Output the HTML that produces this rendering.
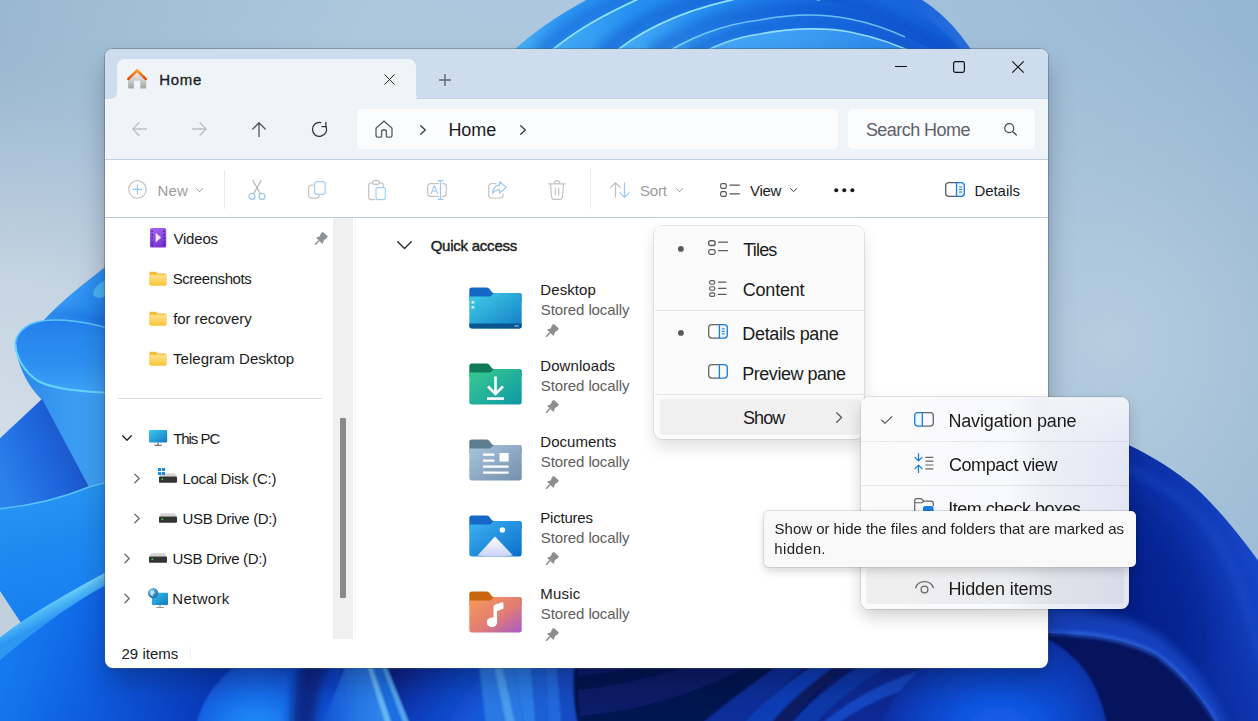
<!DOCTYPE html>
<html>
<head>
<meta charset="utf-8">
<title>Home - File Explorer</title>
<style>
*{box-sizing:border-box;margin:0;padding:0}
html,body{width:1258px;height:721px;overflow:hidden}
body{font-family:"Liberation Sans",sans-serif;position:relative;background:#a9c3d8;color:#1b1b1b}
.abs{position:absolute}
#wall{position:absolute;left:0;top:0;width:1258px;height:721px}
.t{position:absolute;white-space:nowrap;line-height:1}
svg{overflow:visible}

</style>
</head>
<body>
<svg id="wall" viewBox="0 0 1258 721">
<defs>
  <linearGradient id="bgL" x1="0" y1="0" x2="1" y2="0">
    <stop offset="0" stop-color="#a0bcd3"/><stop offset=".1" stop-color="#a9c4d9"/><stop offset=".3" stop-color="#b8d0e2"/><stop offset=".45" stop-color="#b8d0e3"/><stop offset=".8" stop-color="#a8c5dc"/><stop offset="1" stop-color="#9abad5"/>
  </linearGradient>
  <linearGradient id="bgV" x1="0" y1="0" x2="0" y2="1"><stop offset="0" stop-color="#7fa6c8" stop-opacity=".2"/><stop offset=".6" stop-color="#7fa6c8" stop-opacity="0"/></linearGradient>
  <radialGradient id="bgGlowL" cx="0" cy="430" r="380" gradientUnits="userSpaceOnUse">
    <stop offset="0" stop-color="#d2dde8"/><stop offset=".4" stop-color="#c8d6e3" stop-opacity=".95"/><stop offset=".72" stop-color="#b6cadc" stop-opacity=".6"/><stop offset="1" stop-color="#a6bfd5" stop-opacity="0"/>
  </radialGradient>
  <radialGradient id="bgGlowR" cx="1110" cy="340" r="330" gradientUnits="userSpaceOnUse">
    <stop offset="0" stop-color="#b9cee0" stop-opacity=".9"/><stop offset="1" stop-color="#a9c3d9" stop-opacity="0"/>
  </radialGradient>
  <!-- top bloom -->
  <linearGradient id="t0" x1="512" y1="0" x2="973" y2="0" gradientUnits="userSpaceOnUse">
    <stop offset="0" stop-color="#4db2f8"/><stop offset=".1" stop-color="#2f97f2"/><stop offset=".5" stop-color="#1a78ea"/><stop offset=".85" stop-color="#1763da"/><stop offset="1" stop-color="#2a70de"/>
  </linearGradient>
  <linearGradient id="t4" x1="552" y1="0" x2="960" y2="0" gradientUnits="userSpaceOnUse">
    <stop offset="0" stop-color="#44aef8"/><stop offset=".2" stop-color="#2690f0"/><stop offset=".6" stop-color="#1871e6"/><stop offset="1" stop-color="#165fd6"/>
  </linearGradient>
  <linearGradient id="t3" x1="616" y1="0" x2="957" y2="0" gradientUnits="userSpaceOnUse">
    <stop offset="0" stop-color="#48b0f8"/><stop offset=".25" stop-color="#2890f0"/><stop offset=".6" stop-color="#156be2"/><stop offset="1" stop-color="#1259d2"/>
  </linearGradient>
  <linearGradient id="t2" x1="669" y1="0" x2="938" y2="0" gradientUnits="userSpaceOnUse">
    <stop offset="0" stop-color="#3ba3f5"/><stop offset=".3" stop-color="#1f84ec"/><stop offset=".7" stop-color="#176ee2"/><stop offset="1" stop-color="#1560d8"/>
  </linearGradient>
  <linearGradient id="t1" x1="707" y1="0" x2="912" y2="0" gradientUnits="userSpaceOnUse">
    <stop offset="0" stop-color="#45a9f6"/><stop offset=".5" stop-color="#3b9bf1"/><stop offset="1" stop-color="#2a84ea"/>
  </linearGradient>

  <!-- left bloom -->
  <linearGradient id="l_up" x1="45" y1="300" x2="110" y2="340" gradientUnits="userSpaceOnUse">
    <stop offset="0" stop-color="#3f9ff4"/><stop offset=".5" stop-color="#2a8cf0"/><stop offset="1" stop-color="#1c74e4"/>
  </linearGradient>
  <linearGradient id="l_cup" x1="60" y1="320" x2="60" y2="392" gradientUnits="userSpaceOnUse">
    <stop offset="0" stop-color="#2482ec"/><stop offset=".6" stop-color="#2d8ff0"/><stop offset="1" stop-color="#3ea2f5"/>
  </linearGradient>
  <linearGradient id="l_cone" x1="20" y1="400" x2="105" y2="400" gradientUnits="userSpaceOnUse">
    <stop offset="0" stop-color="#2c88ea"/><stop offset=".5" stop-color="#3a9af1"/><stop offset="1" stop-color="#3fa0f3"/>
  </linearGradient>
  <linearGradient id="l_dark" x1="0" y1="470" x2="80" y2="440" gradientUnits="userSpaceOnUse">
    <stop offset="0" stop-color="#2a80ec"/><stop offset=".55" stop-color="#1f66dc"/><stop offset="1" stop-color="#1a52c6"/>
  </linearGradient>
  <linearGradient id="l_low" x1="0" y1="490" x2="40" y2="640" gradientUnits="userSpaceOnUse">
    <stop offset="0" stop-color="#2a98f3"/><stop offset=".4" stop-color="#1e8af0"/><stop offset="1" stop-color="#157cf0"/>
  </linearGradient>
  <linearGradient id="l_band" x1="50" y1="600" x2="58" y2="616" gradientUnits="userSpaceOnUse">
    <stop offset="0" stop-color="#7ad4fb"/><stop offset=".35" stop-color="#52bbf6"/><stop offset="1" stop-color="#2c98f2"/>
  </linearGradient>
  <linearGradient id="l_bot" x1="20" y1="640" x2="230" y2="715" gradientUnits="userSpaceOnUse">
    <stop offset="0" stop-color="#1478ef"/><stop offset=".42" stop-color="#0e5ade"/><stop offset=".85" stop-color="#0a3cbc"/><stop offset="1" stop-color="#0a36b0"/>
  </linearGradient>

  <!-- bottom -->
  <linearGradient id="bt_base" x1="0" y1="0" x2="1258" y2="0" gradientUnits="userSpaceOnUse">
    <stop offset="0" stop-color="#1272ec"/><stop offset=".15" stop-color="#0b44c2"/><stop offset=".3" stop-color="#0c3bb6"/><stop offset=".45" stop-color="#07195c"/><stop offset=".57" stop-color="#050f44"/><stop offset=".7" stop-color="#081f78"/><stop offset="1" stop-color="#0b2c9c"/>
  </linearGradient>
  <radialGradient id="bt_p1" cx="255" cy="738" r="92" gradientUnits="userSpaceOnUse">
    <stop offset="0" stop-color="#2498f8"/><stop offset=".3" stop-color="#1c7ef2"/><stop offset=".65" stop-color="#1460e2"/><stop offset="1" stop-color="#0d44c6"/>
  </radialGradient>
  <linearGradient id="bt_p2" x1="318" y1="0" x2="360" y2="0" gradientUnits="userSpaceOnUse">
    <stop offset="0" stop-color="#0a2c98"/><stop offset=".4" stop-color="#1656da"/><stop offset="1" stop-color="#2270e6"/>
  </linearGradient>
  <linearGradient id="bt_tri" x1="325" y1="0" x2="395" y2="0" gradientUnits="userSpaceOnUse"><stop offset="0" stop-color="#1656d6"/><stop offset=".5" stop-color="#2678e6"/><stop offset="1" stop-color="#348cee"/></linearGradient>
  <filter id="b1" filterUnits="userSpaceOnUse" x="-50" y="-50" width="1400" height="850"><feGaussianBlur stdDeviation="1.1"/></filter>
  <linearGradient id="bt_rib" x1="0" y1="0" x2="1" y2="0">
    <stop offset="0" stop-color="#4aa6f3"/><stop offset=".5" stop-color="#2c7fe8"/><stop offset="1" stop-color="#1a5cd6"/>
  </linearGradient>
  <linearGradient id="bt_d1" x1="395" y1="660" x2="480" y2="720" gradientUnits="userSpaceOnUse">
    <stop offset="0" stop-color="#081f80"/><stop offset=".45" stop-color="#0c3cb8"/><stop offset="1" stop-color="#1659dc"/>
  </linearGradient>
  <radialGradient id="sph" cx="1000" cy="745" r="125" gradientUnits="userSpaceOnUse">
    <stop offset="0" stop-color="#1767f0"/><stop offset=".4" stop-color="#1053de"/><stop offset=".8" stop-color="#0b3ab6"/><stop offset="1" stop-color="#082a98"/>
  </radialGradient>
  <linearGradient id="r_pet" x1="1110" y1="520" x2="1258" y2="470" gradientUnits="userSpaceOnUse">
    <stop offset="0" stop-color="#08248e"/><stop offset=".45" stop-color="#0d33ac"/><stop offset=".8" stop-color="#1646c6"/><stop offset="1" stop-color="#1b4fd0"/>
  </linearGradient>
  <linearGradient id="r_low" x1="1100" y1="640" x2="1258" y2="700" gradientUnits="userSpaceOnUse">
    <stop offset="0" stop-color="#0a2fa6"/><stop offset=".5" stop-color="#1240be"/><stop offset="1" stop-color="#1a50d0"/>
  </linearGradient>
  <clipPath id="cp_up"><path d="M112,262 C88,280 62,300 40,324 L60,345 L112,345 Z"/></clipPath>
  <filter id="b2" filterUnits="userSpaceOnUse" x="-50" y="-50" width="1400" height="850"><feGaussianBlur stdDeviation="2"/></filter>
  <filter id="b5" filterUnits="userSpaceOnUse" x="-50" y="-50" width="1400" height="850"><feGaussianBlur stdDeviation="5"/></filter>
  <filter id="b10" filterUnits="userSpaceOnUse" x="-50" y="-50" width="1400" height="850"><feGaussianBlur stdDeviation="10"/></filter>
</defs>
<rect width="1258" height="721" fill="url(#bgL)"/>
<rect width="1258" height="721" fill="url(#bgV)"/>
<rect width="1258" height="721" fill="url(#bgGlowL)"/>
<rect width="1258" height="721" fill="url(#bgGlowR)"/>
<!-- TOP BLOOM -->
<g>
  <path d="M503,60 C528,36 556,16 590,-2 L919,-2 C945,14 962,34 979,62 Z" fill="url(#t0)"/>
  <path d="M545,56 C575,30 605,14 645,-4" fill="none" stroke="#0f55cc" stroke-width="16" opacity=".38" filter="url(#b5)" transform="translate(-6,-4)"/>
  <path d="M545,56 C575,30 605,14 645,-4 L890,-4 C920,12 948,30 968,60 Z" fill="url(#t4)"/>
  <path d="M545,56 C575,30 605,14 645,-4" fill="none" stroke="#8fe2ff" stroke-width="1.8"/>
  <path d="M606,60 C640,28 690,8 745,-3 C790,-6 840,0 885,20 C915,34 940,46 960,60" fill="none" stroke="#0c4cc4" stroke-width="18" opacity=".4" filter="url(#b5)" transform="translate(-5,-6)"/>
  <path d="M606,60 C640,28 690,8 745,-3 C790,-6 840,0 885,20 C915,34 940,46 960,60 Z" fill="url(#t3)"/>
  <path d="M606,60 C640,28 690,8 745,-3 C780,-6 800,-4 820,0" fill="none" stroke="#8fe2ff" stroke-width="1.8"/>
  <path d="M655,60 C690,36 725,24 760,20 C790,14 820,13 850,19 C885,27 915,40 945,56" fill="none" stroke="#0c4cc4" stroke-width="16" opacity=".4" filter="url(#b5)" transform="translate(-3,-7)"/>
  <path d="M655,60 C690,36 725,24 760,20 C790,14 820,13 850,19 C885,27 915,40 945,56 L945,60 Z" fill="url(#t2)"/>
  <path d="M655,60 C690,36 725,24 760,20 C790,14 820,13 850,19 C870,23 890,30 905,37" fill="none" stroke="#8fe2ff" stroke-width="1.7" opacity=".9"/>
  <path d="M690,60 C715,44 738,37 760,34 C790,28 825,27 850,32 C875,37 895,43 920,56" fill="none" stroke="#0c4cc4" stroke-width="14" opacity=".4" filter="url(#b5)" transform="translate(-2,-6)"/>
  <path d="M690,60 C715,44 738,37 760,34 C790,28 825,27 850,32 C875,37 895,43 920,56 L920,60 Z" fill="url(#t1)"/>
  <path d="M690,60 C715,44 738,37 760,34 C790,28 825,27 850,32 C875,37 895,43 920,56" fill="none" stroke="#9be6ff" stroke-width="1.7" opacity=".9"/>
</g>
<!-- LEFT BLOOM -->
<g>
  <!-- upper petal -->
  <path d="M112,262 C88,280 62,300 40,324 L60,345 L112,345 Z" fill="url(#l_up)"/>
  <ellipse cx="104" cy="289" rx="12" ry="7" fill="#46b4f2" transform="rotate(-35 104 289)"/>
  <!-- shadow under upper petal onto cup -->
  <!-- cone body -->
  <path d="M16,350 C20,372 30,388 42,400 L90,490 L112,490 L112,380 Z" fill="url(#l_cone)"/>
  <!-- cup interior -->
  <path d="M15.5,344 C15.5,336 22,328 32,323.5 C48,317.5 78,319 112,329.5 L112,393 C85,391.5 55,390 38,381 C24,372 15.5,356 15.5,344 Z" fill="url(#l_cup)"/>
  <g clip-path="url(#cp_up)"><path d="M40,316 C60,313 90,316 116,324" fill="none" stroke="#1560d0" stroke-width="9" opacity=".4" filter="url(#b5)"/></g>
  <path d="M15.5,344 C15.5,336 22,328 32,323.5 C48,317.5 78,319 112,329.5" fill="none" stroke="#5cc4fb" stroke-width="1.5"/>
  <path d="M15.5,344 C15.5,356 24,372 38,381 C55,390 85,391.5 112,393" fill="none" stroke="#66d4ff" stroke-width="2"/>
  <!-- dark petal -->
  <path d="M-2,440 L42,399 L89,487 C60,499 30,506 -2,510 Z" fill="url(#l_dark)"/>
  <!-- lower big petal -->
  <path d="M-2,509 C30,506 62,498 89,487 C96,485 104,483 112,482 L112,600 L-2,680 Z" fill="url(#l_low)"/>
  <path d="M-2,509 C30,506 62,498 89,487 C96,485 104,483 112,482" fill="none" stroke="#58c2f8" stroke-width="1.6"/>
  <!-- gray notch -->
  <path d="M-2,588 L21,623 L-2,640 Z" fill="#c2d0dd"/>
  <!-- below band -->
  <path d="M-2,650 L112,578 L340,640 L340,725 L-2,725 Z" fill="url(#l_bot)"/>
  <!-- band -->
  <path d="M-2,639 C8,631 14,627 21,622 C50,603 80,586 112,569 L112,582 C80,598 40,626 -2,662 Z" fill="url(#l_band)"/>
</g>
<!-- RIGHT PETAL -->
<g>
  <path d="M1040,412 C1075,422 1125,440 1160,462 C1172,469 1182,477 1190,483 C1213,502 1240,535 1262,566 L1262,725 L1040,725 L1040,440 Z" fill="url(#r_pet)"/>
  <path d="M1090,478 C1140,486 1178,522 1202,580 C1216,620 1212,650 1198,680 L1040,700 L1040,478 Z" fill="#061d86" opacity=".38" filter="url(#b10)"/>
  <path d="M1100,462 C1150,472 1195,500 1222,548 C1240,580 1252,620 1260,660" fill="none" stroke="#2458d6" stroke-width="5" opacity=".55" filter="url(#b5)"/>
  <!-- upper surface band above ridge -->
  <path d="M1040,606 C1085,606 1130,616 1160,636 C1190,658 1212,690 1228,725 L1200,725 L1040,640 Z" fill="#1a4ccc" opacity=".75" filter="url(#b5)"/>
  <!-- dark wedge under ridge -->
  <path d="M1040,633 C1085,633 1125,638 1156,654 C1183,674 1205,702 1217,725 L1040,725 Z" fill="#06145e"/>
  <path d="M1048,632.6 C1085,633 1125,638 1156,654 C1183,674 1205,702 1217,723" fill="none" stroke="#2f68e4" stroke-width="2.6" opacity=".9" filter="url(#b2)"/>
  <path d="M1070,633.5 C1100,634 1130,640 1156,654 C1166,661 1176,669 1186,679" fill="none" stroke="#3a74ea" stroke-width="1.8" opacity=".7" filter="url(#b2)" stroke-linecap="round"/>
</g>
<!-- BOTTOM STRIP -->
<g filter="url(#b1)">
  <rect x="330" y="655" width="715" height="70" fill="url(#bt_base)"/>
  <!-- petal 1 -->
  <path d="M196,725 C203,696 222,672 252,655 L340,655 L340,725 Z" fill="url(#bt_p1)"/>
  <path d="M318,650 C308,680 304,700 304,730" fill="none" stroke="#08207c" stroke-width="26" opacity=".85" filter="url(#b5)"/>
  
  <path d="M354,655 L322,725 L364,725 L358,655 Z" fill="url(#bt_p2)"/>
  <!-- light ribbons -->
  <path d="M350,655 L368,655 L404,725 L322,725 Z" fill="url(#bt_tri)"/>
  <path d="M368,655 L380,655 L412,725 L392,725 Z" fill="#1f6ee0"/>
  <path d="M364,655 L368,655 L392,725 L386,725 Z" fill="#7cc9f8" opacity=".75"/>
  <path d="M378,655 L382,655 L410,725 L404,725 Z" fill="#62b4f4" opacity=".8"/>
  <path d="M382,655 L500,655 L500,725 L410,725 Z" fill="url(#bt_d1)"/>
  <!-- ribbons 480-560 -->
  <path d="M478,655 L492,655 L506,725 L486,725 Z" fill="#2a78e4"/>
  <path d="M492,655 L500,655 L516,725 L506,725 Z" fill="#4a9cee"/>
  <path d="M500,655 L512,655 L524,725 L516,725 Z" fill="#2a78e4"/>
  <path d="M512,655 L530,655 L536,725 L524,725 Z" fill="#2c7ce6"/>
  <path d="M530,655 L545,655 L548,725 L536,725 Z" fill="#1c5ed6"/>
  <path d="M545,655 L556,655 L562,725 L548,725 Z" fill="#2068dc"/>
  <path d="M556,655 L575,655 C572,690 574,705 578,725 L562,725 Z" fill="#164cc4"/>
  <!-- dark navy w/ curves -->
  <path d="M575,655 C572,690 574,705 578,725 L760,725 L800,655 Z" fill="#061450"/>
  <path d="M578,690 C630,684 680,670 720,655 L770,655 C710,690 640,712 580,716 Z" fill="#0a2278" opacity=".55"/>
  <path d="M578,676 C620,672 650,664 676,655 L640,655 C620,662 600,666 578,668 Z" fill="#0b2a8c" opacity=".5"/>
  <!-- diagonal ribbons 720-900 -->
  <path d="M700,725 C730,700 760,678 792,655 L820,655 C790,680 765,700 742,725 Z" fill="#0c2f98"/>
  <path d="M742,725 C770,695 800,672 830,655 L850,655 C815,680 790,700 770,725 Z" fill="#103eb4"/>
  <path d="M770,725 C790,700 815,680 850,655 L858,655 C830,680 806,700 790,725 Z" fill="#071a60"/>
  <path d="M790,725 C815,695 850,670 880,655 L905,655 C865,680 835,700 815,725 Z" fill="#0d38a8"/>
  <path d="M815,725 C835,700 865,680 905,655 L1000,655 L1000,725 Z" fill="#0a2c94"/>
  <path d="M836,725 C870,700 905,688 940,680 L940,664 C900,675 860,692 820,725 Z" fill="#1246c2"/>
  <!-- sphere -->
  <path d="M880,725 C895,690 930,650 985,632 C1035,622 1070,648 1089,676 C1098,692 1104,708 1107,725 Z" fill="url(#sph)"/>
</g>
</svg>
<div class="abs" style="left:105px;top:49px;width:943px;height:619px;border-radius:8px;box-shadow:0 0 0 1px rgba(70,85,105,.38),0 15px 26px rgba(0,0,25,.25),0 2px 10px rgba(0,0,20,.06)"></div>
<div class="abs" style="left:105px;top:49px;width:943px;height:619px;border-radius:8px;overflow:hidden;background:#fff"><div class="abs" style="left:-105px;top:-49px;width:1258px;height:721px">
<div class="abs" style="left:105px;top:49px;width:943px;height:50px;background:#cedded;"></div>
<div class="abs" style="left:117px;top:59px;width:299px;height:40px;background:#eff4f9;border-radius:8px 8px 0 0"></div>
<svg class="abs" style="left:110px;top:92px;" width="7" height="7" viewBox="0 0 7 7"><path d="M7,0 L7,7 L0,7 A7,7 0 0 0 7,0Z" fill="#eff4f9"/></svg>
<svg class="abs" style="left:416px;top:93.5px;" width="5.5" height="5.5" viewBox="0 0 5.5 5.5"><path d="M0,0 L0,5.5 L5.5,5.5 A5.5,5.5 0 0 1 0,0Z" fill="#eff4f9"/></svg>
<svg class="abs" style="left:127px;top:69px;" width="20.4" height="20" viewBox="0 0 20.4 20"><defs><linearGradient id="hb" x1="0" y1="0" x2="0" y2="1"><stop offset="0" stop-color="#ededed"/><stop offset=".45" stop-color="#d4d4d4"/><stop offset="1" stop-color="#a3a3a3"/></linearGradient>
<linearGradient id="hr" x1="0" y1="0" x2="0" y2="1"><stop offset="0" stop-color="#ff9a1f"/><stop offset="1" stop-color="#e24e0c"/></linearGradient></defs>
<path d="M1.1,9.6 L10.1,1.8 L19.2,9.6 L19.2,18.6 Q19.2,19.6 18.2,19.6 L13.3,19.6 L13.3,11.7 L6.9,11.7 L6.9,19.6 L2.1,19.6 Q1.1,19.6 1.1,18.6Z" fill="url(#hb)"/>
<path d="M1.3,10 L10.1,1.5 L18.9,10" fill="none" stroke="url(#hr)" stroke-width="2.5" stroke-linecap="round" stroke-linejoin="round"/></svg>
<div class="t" style="left:159.3px;top:72.0px;font-size:15px;color:#1b1b1b;letter-spacing:0.67px;-webkit-text-stroke:.3px #1b1b1b;">Home</div>
<svg class="abs" style="left:383.5px;top:73.5px;" width="11" height="11" viewBox="0 0 11 11"><path d="M0.5,0.5 L10.5,10.5 M10.5,0.5 L0.5,10.5" stroke="#222" stroke-width="1.0" fill="none"/></svg>
<svg class="abs" style="left:439px;top:74px;" width="12" height="12" viewBox="0 0 12 12"><path d="M6,0 V12 M0,6 H12" stroke="#5d6671" stroke-width="1.4" fill="none"/></svg>
<svg class="abs" style="left:895px;top:61px;" width="12" height="12" viewBox="0 0 12 12"><path d="M0,5.5 H12" stroke="#111" stroke-width="1.1"/></svg>
<svg class="abs" style="left:953px;top:61px;" width="12" height="12" viewBox="0 0 12 12"><rect x="0.6" y="0.6" width="10.8" height="10.8" rx="1.8" fill="none" stroke="#111" stroke-width="1.2"/></svg>
<svg class="abs" style="left:1012px;top:61px;" width="12" height="12" viewBox="0 0 12 12"><path d="M0.3,0.3 L11.7,11.7 M11.7,0.3 L0.3,11.7" stroke="#111" stroke-width="1.15" fill="none"/></svg>
<div class="abs" style="left:105px;top:99px;width:943px;height:60px;background:#eff4f9;"></div>
<div class="abs" style="left:416px;top:98px;width:632px;height:1px;background:#c6d3e4;"></div>
<div class="abs" style="left:105px;top:159px;width:943px;height:1px;background:#c0d0e3;"></div>
<div class="abs" style="left:357px;top:109px;width:481px;height:40.4px;background:#fbfcfe;border-radius:5px"></div>
<div class="abs" style="left:848px;top:109px;width:187px;height:40.4px;background:#fbfcfe;border-radius:5px"></div>
<svg class="abs" style="left:132px;top:122px;" width="15" height="14" viewBox="0 0 15 14"><path d="M14.5,7 H1 M7,0.8 L0.8,7 L7,13.2" fill="none" stroke="#b9bfc6" stroke-width="1.3" stroke-linecap="round" stroke-linejoin="round"/></svg>
<svg class="abs" style="left:192px;top:122px;" width="15" height="14" viewBox="0 0 15 14"><path d="M0.5,7 H14 M8,0.8 L14.2,7 L8,13.2" fill="none" stroke="#b9bfc6" stroke-width="1.3" stroke-linecap="round" stroke-linejoin="round"/></svg>
<svg class="abs" style="left:252px;top:122px;" width="14" height="15" viewBox="0 0 14 15"><path d="M7,14.5 V1 M0.8,7 L7,0.8 L13.2,7" fill="none" stroke="#4f545b" stroke-width="1.3" stroke-linecap="round" stroke-linejoin="round"/></svg>
<svg class="abs" style="left:312px;top:121.9px;" width="15" height="15" viewBox="0 0 15 15"><path d="M8.72,0.51 A7.0,7.0 0 1 0 13.89,4.55" fill="none" stroke="#2e3136" stroke-width="1.25" stroke-linecap="round"/><path d="M13.9,0.3 V4.6 H9.9" fill="none" stroke="#2e3136" stroke-width="1.25" stroke-linecap="round" stroke-linejoin="round"/></svg>
<svg class="abs" style="left:375px;top:120px;" width="18" height="18.6" viewBox="0 0 18 18.6"><path d="M1,8.2 L9,1 L17,8.2 V15.5 Q17,17.2 15.3,17.2 H12.2 Q11.4,17.2 11.4,16.4 V12 Q11.4,9.8 9,9.8 Q6.6,9.8 6.6,12 V16.4 Q6.6,17.2 5.8,17.2 H2.7 Q1,17.2 1,15.5Z" fill="none" stroke="#5c6066" stroke-width="1.35" stroke-linejoin="round"/></svg>
<svg class="abs" style="left:419.5px;top:124.5px;" width="6" height="10" viewBox="0 0 6 10"><path d="M0.7,0.7 L5.3,5 L0.7,9.3" fill="none" stroke="#333" stroke-width="1.2" stroke-linecap="round" stroke-linejoin="round"/></svg>
<div class="t" style="left:448.4px;top:120.7px;font-size:18px;color:#1b1b1b;letter-spacing:-0.07px;">Home</div>
<svg class="abs" style="left:519.5px;top:124.5px;" width="6" height="10" viewBox="0 0 6 10"><path d="M0.7,0.7 L5.3,5 L0.7,9.3" fill="none" stroke="#333" stroke-width="1.2" stroke-linecap="round" stroke-linejoin="round"/></svg>
<div class="t" style="left:865.9px;top:120.7px;font-size:18px;color:#5e6268;letter-spacing:-0.55px;">Search Home</div>
<svg class="abs" style="left:1004px;top:123.2px;" width="13" height="12.6" viewBox="0 0 13 12.6"><circle cx="5.2" cy="5.2" r="4.5" fill="none" stroke="#44484e" stroke-width="1.2"/><path d="M8.5,8.5 L12.4,12" stroke="#44484e" stroke-width="1.3" stroke-linecap="round"/></svg>
<div class="abs" style="left:105px;top:160px;width:943px;height:57px;background:#ffffff;"></div>
<div class="abs" style="left:105px;top:217px;width:943px;height:1px;background:#bccde1;"></div>
<svg class="abs" style="left:128px;top:180px;" width="19" height="19" viewBox="0 0 19 19"><circle cx="9.4" cy="9.4" r="8.7" fill="none" stroke="#c3c3c3" stroke-width="1.2"/><path d="M9.4,5.2 V13.6 M5.2,9.4 H13.6" stroke="#93c7ee" stroke-width="1.2" stroke-linecap="round"/></svg>
<div class="t" style="left:157.5px;top:183.1px;font-size:15px;color:#9c9c9c;letter-spacing:0.16px;">New</div>
<svg class="abs" style="left:196px;top:188px;" width="7" height="4.5" viewBox="0 0 7 4.5"><path d="M0.5,0.5 L3.5,3.7 L6.5,0.5" fill="none" stroke="#a0a0a0" stroke-width="1" stroke-linecap="round" stroke-linejoin="round"/></svg>
<div class="abs" style="left:224px;top:170px;width:1px;height:39px;background:#eaeaea;"></div>
<svg class="abs" style="left:248px;top:180px;" width="18" height="20" viewBox="0 0 18 20"><path d="M5,0.6 L12.3,13.6 M13,0.6 L5.7,13.6" stroke="#b8b8b8" stroke-width="1.2" fill="none" stroke-linecap="round"/><circle cx="4" cy="16.4" r="3" fill="none" stroke="#9ccaf0" stroke-width="1.2"/><circle cx="14" cy="16.4" r="3" fill="none" stroke="#9ccaf0" stroke-width="1.2"/></svg>
<svg class="abs" style="left:308px;top:181px;" width="18" height="18" viewBox="0 0 18 18"><path d="M5.2,4.2 H3.6 Q0.7,4.2 0.7,7.1 V14.2 Q0.7,17.1 3.6,17.1 H8.4 Q11.2,17.1 11.3,14.6" fill="none" stroke="#c3c3c3" stroke-width="1.2" stroke-linecap="round"/><rect x="6.6" y="0.7" width="10.6" height="12.6" rx="2.6" fill="#fff" stroke="#a4cff2" stroke-width="1.2"/></svg>
<svg class="abs" style="left:368px;top:179.5px;" width="18" height="20.5" viewBox="0 0 18 20.5"><path d="M7,19.6 H3 Q0.7,19.6 0.7,17.3 V5 Q0.7,2.8 3,2.8 H4.6 M11.4,2.8 H13 Q15.3,2.8 15.3,5 V7.2" fill="none" stroke="#c3c3c3" stroke-width="1.2" stroke-linecap="round"/><rect x="4.6" y="0.7" width="6.8" height="3.6" rx="1.6" fill="none" stroke="#c3c3c3" stroke-width="1.2"/><rect x="8" y="7.6" width="9.3" height="12" rx="2" fill="#fff" stroke="#a4cff2" stroke-width="1.2"/></svg>
<svg class="abs" style="left:427px;top:180px;" width="20" height="20" viewBox="0 0 20 20"><path d="M11.5,3.6 H3.6 Q0.7,3.6 0.7,6.5 V13.5 Q0.7,16.4 3.6,16.4 H11.5 M15.6,3.6 H16.4 Q19.3,3.6 19.3,6.5 V13.5 Q19.3,16.4 16.4,16.4 H15.6" fill="none" stroke="#c3c3c3" stroke-width="1.2" stroke-linecap="round"/><path d="M11,0.6 H16 M11,19.4 H16 M13.5,0.6 V19.4" stroke="#9ccaf0" stroke-width="1.2" stroke-linecap="round"/><path d="M4.2,13.4 L7.4,5.8 L10.6,13.4 M5.2,11 H9.6" fill="none" stroke="#9ccaf0" stroke-width="1.1" stroke-linecap="round" stroke-linejoin="round"/></svg>
<svg class="abs" style="left:488px;top:181px;" width="19" height="18" viewBox="0 0 19 18"><path d="M8,2.6 H3.8 Q0.7,2.6 0.7,5.7 V13.9 Q0.7,17 3.8,17 H12 Q15.1,17 15.1,13.9 V13" fill="none" stroke="#c3c3c3" stroke-width="1.2" stroke-linecap="round"/><path d="M11.6,0.8 L18.3,6.4 L11.6,12 V8.9 Q7,8.6 4.6,12.4 Q5.2,4.6 11.6,3.9Z" fill="#fff" stroke="#9ccaf0" stroke-width="1.2" stroke-linejoin="round"/></svg>
<svg class="abs" style="left:548px;top:180px;" width="18" height="20" viewBox="0 0 18 20"><path d="M0.6,3.8 H17.4 M6.2,3.6 Q6.2,0.7 9,0.7 Q11.8,0.7 11.8,3.6 M2.4,4 L3.6,17 Q3.8,19.3 6,19.3 H12 Q14.2,19.3 14.4,17 L15.6,4" fill="none" stroke="#c3c3c3" stroke-width="1.2" stroke-linecap="round"/><path d="M7.3,8 V15 M10.7,8 V15" stroke="#c3c3c3" stroke-width="1.2" stroke-linecap="round"/></svg>
<div class="abs" style="left:590px;top:170px;width:1px;height:39px;background:#eaeaea;"></div>
<svg class="abs" style="left:610px;top:182px;" width="20" height="16" viewBox="0 0 20 16"><path d="M5.5,15.2 V0.8 M0.7,5.4 L5.5,0.7 L10.3,5.4" fill="none" stroke="#c0c0c0" stroke-width="1.2" stroke-linecap="round" stroke-linejoin="round"/><path d="M14.5,0.8 V15.2 M9.7,10.6 L14.5,15.3 L19.3,10.6" fill="none" stroke="#9ccaf0" stroke-width="1.2" stroke-linecap="round" stroke-linejoin="round"/></svg>
<div class="t" style="left:639.9px;top:183.1px;font-size:15px;color:#9c9c9c;letter-spacing:-0.13px;">Sort</div>
<svg class="abs" style="left:676px;top:188px;" width="7" height="4.5" viewBox="0 0 7 4.5"><path d="M0.5,0.5 L3.5,3.7 L6.5,0.5" fill="none" stroke="#a0a0a0" stroke-width="1" stroke-linecap="round" stroke-linejoin="round"/></svg>
<svg class="abs" style="left:720px;top:183px;" width="20" height="14" viewBox="0 0 20 14"><rect x="0.7" y="0.7" width="5.6" height="4.6" rx="1.6" fill="none" stroke="#555" stroke-width="1.2"/><rect x="0.7" y="8.7" width="5.6" height="4.6" rx="1.6" fill="none" stroke="#555" stroke-width="1.2"/><path d="M10,2.2 H19.3 M10,10.8 H19.3" stroke="#555" stroke-width="1.3" stroke-linecap="round"/></svg>
<div class="t" style="left:750.0px;top:183.1px;font-size:15px;color:#1b1b1b;letter-spacing:-0.32px;">View</div>
<svg class="abs" style="left:789.5px;top:188px;" width="7" height="4.5" viewBox="0 0 7 4.5"><path d="M0.5,0.5 L3.5,3.7 L6.5,0.5" fill="none" stroke="#444" stroke-width="1" stroke-linecap="round" stroke-linejoin="round"/></svg>
<svg class="abs" style="left:833.5px;top:187.8px;" width="21" height="4.4" viewBox="0 0 21 4.4"><circle cx="2.2" cy="2.2" r="2.05" fill="#1b1b1b"/><circle cx="10.3" cy="2.2" r="2.05" fill="#1b1b1b"/><circle cx="18.4" cy="2.2" r="2.05" fill="#1b1b1b"/></svg>
<svg class="abs" style="left:945px;top:182.4px;" width="20" height="15" viewBox="0 0 20 15"><path d="M11.5,0.7 H3.7 Q0.7,0.7 0.7,3.7 V11.3 Q0.7,14.3 3.7,14.3 H11.5" fill="none" stroke="#5a5a5a" stroke-width="1.3"/><path d="M11.5,0.7 H16.3 Q19.3,0.7 19.3,3.7 V11.3 Q19.3,14.3 16.3,14.3 H11.5Z" fill="#eaf3fc" stroke="#1a7ee0" stroke-width="1.3"/><path d="M14,5 H17 M14,7.5 H17 M14,10 H17" stroke="#1a7ee0" stroke-width="1"/></svg>
<div class="t" style="left:974.4px;top:183.1px;font-size:15px;color:#1b1b1b;letter-spacing:-0.05px;">Details</div>
<div class="abs" style="left:333px;top:218px;width:20px;height:421px;background:#f0f0f0;"></div>
<div class="abs" style="left:340px;top:418px;width:6px;height:180px;background:#8a8a8a;border-radius:1px"></div>
<div class="abs" style="left:355px;top:218px;width:1px;height:421px;background:#f4f4f4;"></div>
<div class="abs" style="left:118px;top:398px;width:204px;height:1px;background:#dcdcdc;"></div>
<svg width="0" height="0" class="abs"><defs><linearGradient id="fg" x1="0" y1="0" x2="0" y2="1"><stop offset="0" stop-color="#ffe08a"/><stop offset="1" stop-color="#f8c63d"/></linearGradient></defs></svg>
<svg class="abs" style="left:150px;top:228.3px;" width="16.2" height="19.5" viewBox="0 0 16.2 19.5"><defs><linearGradient id="vg" x1="0" y1="0" x2="0.3" y2="1"><stop offset="0" stop-color="#a566f2"/><stop offset="1" stop-color="#7836d6"/></linearGradient></defs><rect x="0" y="0" width="16.2" height="19.5" rx="1.6" fill="url(#vg)"/><path d="M5.6,4.8 L11.2,9.6 L5.6,14.4Z" fill="#efe6fb"/><path d="M2.2,2.4 v1.5 M2.2,6 v1.5 M2.2,9.6 v1.5 M2.2,13.2 v1.5 M2.2,16.6 v1.3 M14,2.4 v1.5 M14,6 v1.5 M14,9.6 v1.5 M14,13.2 v1.5 M14,16.6 v1.3" stroke="#4a1f9c" stroke-width="1.5"/></svg>
<div class="t" style="left:173.4px;top:230.9px;font-size:15px;color:#1b1b1b;letter-spacing:-0.18px;">Videos</div>
<svg class="abs" style="left:315.2px;top:231.9px;" width="13" height="12.7" viewBox="0 0 13 12.7"><path d="M7.9,0.1 L12.9,4.6 L11.5,6.6 L9,7.9 L7.6,11.9 L1,5.7 L4.8,4.2 L6,1Z" fill="#89949b"/><path d="M3.6,9.1 L0.6,12.3" stroke="#89949b" stroke-width="1.5" stroke-linecap="round"/></svg>
<svg class="abs" style="left:149px;top:271px;" width="18" height="15" viewBox="0 0 18 15"><path d="M0.5,2.2 Q0.5,0.8 1.9,0.8 H6.2 Q7,0.8 7.6,1.4 L8.8,2.6 H16.1 Q17.5,2.6 17.5,4 V13 Q17.5,14.4 16.1,14.4 H1.9 Q0.5,14.4 0.5,13Z" fill="#f5b82e"/><path d="M0.5,5 Q0.5,3.8 1.7,3.8 H16.3 Q17.5,3.8 17.5,5 V13 Q17.5,14.4 16.1,14.4 H1.9 Q0.5,14.4 0.5,13Z" fill="url(#fg)"/></svg>
<div class="t" style="left:172.7px;top:270.8px;font-size:15px;color:#1b1b1b;letter-spacing:-0.44px;">Screenshots</div>
<svg class="abs" style="left:149px;top:311px;" width="18" height="15" viewBox="0 0 18 15"><path d="M0.5,2.2 Q0.5,0.8 1.9,0.8 H6.2 Q7,0.8 7.6,1.4 L8.8,2.6 H16.1 Q17.5,2.6 17.5,4 V13 Q17.5,14.4 16.1,14.4 H1.9 Q0.5,14.4 0.5,13Z" fill="#f5b82e"/><path d="M0.5,5 Q0.5,3.8 1.7,3.8 H16.3 Q17.5,3.8 17.5,5 V13 Q17.5,14.4 16.1,14.4 H1.9 Q0.5,14.4 0.5,13Z" fill="url(#fg)"/></svg>
<div class="t" style="left:173.2px;top:310.8px;font-size:15px;color:#1b1b1b;letter-spacing:-0.06px;">for recovery</div>
<svg class="abs" style="left:149px;top:351px;" width="18" height="15" viewBox="0 0 18 15"><path d="M0.5,2.2 Q0.5,0.8 1.9,0.8 H6.2 Q7,0.8 7.6,1.4 L8.8,2.6 H16.1 Q17.5,2.6 17.5,4 V13 Q17.5,14.4 16.1,14.4 H1.9 Q0.5,14.4 0.5,13Z" fill="#f5b82e"/><path d="M0.5,5 Q0.5,3.8 1.7,3.8 H16.3 Q17.5,3.8 17.5,5 V13 Q17.5,14.4 16.1,14.4 H1.9 Q0.5,14.4 0.5,13Z" fill="url(#fg)"/></svg>
<div class="t" style="left:173.1px;top:350.8px;font-size:15px;color:#1b1b1b;letter-spacing:0.01px;">Telegram Desktop</div>
<svg class="abs" style="left:122.3px;top:434.5px;" width="10" height="6.5" viewBox="0 0 10 6.5"><path d="M0.7,0.7 L5,5.3 L9.3,0.7" fill="none" stroke="#222" stroke-width="1.3" stroke-linecap="round" stroke-linejoin="round"/></svg>
<svg class="abs" style="left:148.8px;top:430px;" width="18.2" height="16" viewBox="0 0 18.2 16"><defs><linearGradient id="pcg" x1="0" y1="0" x2="1" y2="1"><stop offset="0" stop-color="#3ccdea"/><stop offset="1" stop-color="#1576c6"/></linearGradient></defs><rect x="0" y="0" width="18.2" height="12.6" rx="1" fill="url(#pcg)"/><path d="M9.1,12.6 V15 M5.4,15.3 H12.8" stroke="#6d7780" stroke-width="1.3"/></svg>
<div class="t" style="left:173.2px;top:430.9px;font-size:15px;color:#1b1b1b;letter-spacing:-1.05px;">This PC</div>
<svg class="abs" style="left:134px;top:472.5px;" width="6" height="11" viewBox="0 0 6 11"><path d="M0.9,1.2 L5.2,5.5 L0.9,9.8" fill="none" stroke="#6a6a6a" stroke-width="1.3" stroke-linecap="round" stroke-linejoin="round"/></svg>
<svg class="abs" style="left:157.9px;top:468.2px;" width="19" height="15" viewBox="0 0 19 15"><g transform="translate(1,5)"><path d="M2.4,0.2 H15.6 L18,3.6 H0Z" fill="#d4d4d4"/><rect x="0" y="3.5" width="18" height="6.2" rx=".9" fill="#333"/><rect x="2.6" y="5.6" width="1.5" height="1.5" fill="#47e047"/></g><path d="M0,0 h3.1 v3.1 h-3.1z M3.9,0 h3.1 v3.1 h-3.1z M0,3.9 h3.1 v3.1 h-3.1z M3.9,3.9 h3.1 v3.1 h-3.1z" fill="#1c8be8"/></svg>
<div class="t" style="left:182.4px;top:470.9px;font-size:15px;color:#1b1b1b;letter-spacing:-0.31px;">Local Disk (C:)</div>
<svg class="abs" style="left:134px;top:512.5px;" width="6" height="11" viewBox="0 0 6 11"><path d="M0.9,1.2 L5.2,5.5 L0.9,9.8" fill="none" stroke="#6a6a6a" stroke-width="1.3" stroke-linecap="round" stroke-linejoin="round"/></svg>
<svg class="abs" style="left:158.9px;top:513.3px;" width="18" height="10" viewBox="0 0 18 10"><path d="M2.4,0.2 H15.6 L18,3.6 H0Z" fill="#d4d4d4"/><rect x="0" y="3.5" width="18" height="6.2" rx=".9" fill="#333"/><rect x="2.6" y="5.6" width="1.5" height="1.5" fill="#47e047"/></svg>
<div class="t" style="left:182.5px;top:510.9px;font-size:15px;color:#1b1b1b;letter-spacing:-0.35px;">USB Drive (D:)</div>
<svg class="abs" style="left:124px;top:552.5px;" width="6" height="11" viewBox="0 0 6 11"><path d="M0.9,1.2 L5.2,5.5 L0.9,9.8" fill="none" stroke="#6a6a6a" stroke-width="1.3" stroke-linecap="round" stroke-linejoin="round"/></svg>
<svg class="abs" style="left:149px;top:553.3px;" width="18" height="10" viewBox="0 0 18 10"><path d="M2.4,0.2 H15.6 L18,3.6 H0Z" fill="#d4d4d4"/><rect x="0" y="3.5" width="18" height="6.2" rx=".9" fill="#333"/><rect x="2.6" y="5.6" width="1.5" height="1.5" fill="#47e047"/></svg>
<div class="t" style="left:172.4px;top:550.9px;font-size:15px;color:#1b1b1b;letter-spacing:-0.35px;">USB Drive (D:)</div>
<svg class="abs" style="left:124px;top:592.5px;" width="6" height="11" viewBox="0 0 6 11"><path d="M0.9,1.2 L5.2,5.5 L0.9,9.8" fill="none" stroke="#6a6a6a" stroke-width="1.3" stroke-linecap="round" stroke-linejoin="round"/></svg>
<svg class="abs" style="left:148px;top:588px;" width="20" height="20" viewBox="0 0 20 20"><defs><linearGradient id="ng" x1="0" y1="0" x2="1" y2="1"><stop offset="0" stop-color="#34c2ea"/><stop offset="1" stop-color="#1279c4"/></linearGradient><radialGradient id="gl" cx=".35" cy=".3" r=".8"><stop offset="0" stop-color="#8fd0f0"/><stop offset=".5" stop-color="#3f93cf"/><stop offset="1" stop-color="#1d5f9e"/></radialGradient></defs><rect x="3.9" y="4.7" width="16.1" height="12.3" rx="1" fill="url(#ng)"/><path d="M12,17 V19.3 M8.3,19.5 H15.8" stroke="#8a949c" stroke-width="1.1"/><circle cx="5.1" cy="5.1" r="5.2" fill="url(#gl)"/><path d="M2.6,3.4 Q4.4,2 5.8,3 L6.6,5.4 L4.6,6.2 L5.2,8.2 Q3,8 2.2,5.8Z" fill="#d4ecf8" opacity=".85"/></svg>
<div class="t" style="left:172.3px;top:590.9px;font-size:15px;color:#1b1b1b;letter-spacing:0.33px;">Network</div>
<div class="t" style="left:121.5px;top:645.8px;font-size:15px;color:#222;letter-spacing:0.01px;">29 items</div>
<div class="abs" style="left:190px;top:647px;width:1px;height:13px;background:#f1f1f1;"></div>
<svg class="abs" style="left:396.6px;top:241px;" width="15" height="8.4" viewBox="0 0 15 8.4"><path d="M0.7,0.7 L7.5,7.5 L14.3,0.7" fill="none" stroke="#222" stroke-width="1.3" stroke-linecap="round" stroke-linejoin="round"/></svg>
<div class="t" style="left:430.7px;top:238.1px;font-size:15px;color:#1b1b1b;letter-spacing:-0.24px;-webkit-text-stroke:.4px #1b1b1b;">Quick access</div>
<svg class="abs" style="left:469.4px;top:286.6px;" width="53" height="42" viewBox="0 0 53 42"><defs><linearGradient id="fd" x1="0" y1="0" x2="1" y2="1"><stop offset="0" stop-color="#42cfe6"/><stop offset="1" stop-color="#127dc8"/></linearGradient></defs>
<path d="M0.3,3 Q0.3,0.4 2.9,0.4 H17.4 Q19.2,0.4 20.3,1.8 L22.8,5 Q23.6,5.9 24.8,5.9 H50.2 Q52.7,5.9 52.7,8.4 V14 H0.3Z" fill="#1467c6"/>
<path d="M0.3,9.6 H19.5 Q21.2,9.6 22.4,8.4 L23.6,7.2 Q24.8,5.9 26.5,5.9 H50.2 Q52.7,5.9 52.7,8.4 V38.8 Q52.7,41.4 50.1,41.4 H2.9 Q0.3,41.4 0.3,38.8Z" fill="url(#fd)"/>
<path d="M0.3,36.6 H52.7 V38.8 Q52.7,41.4 50.1,41.4 H2.9 Q0.3,41.4 0.3,38.8Z" fill="#0b568f"/><rect x="2.6" y="14" width="2.6" height="2.6" fill="#d8f4fb"/><rect x="2.6" y="19" width="2.6" height="2.6" fill="#d8f4fb"/><rect x="45.5" y="38.2" width="4.4" height="1.4" fill="#6fb4dc"/></svg>
<div class="t" style="left:540.3px;top:281.9px;font-size:15px;color:#1b1b1b;letter-spacing:0.09px;">Desktop</div>
<div class="t" style="left:540.8px;top:301.9px;font-size:15px;color:#5e5e5e;letter-spacing:-0.11px;">Stored locally</div>
<svg class="abs" style="left:545.8px;top:324px;" width="13" height="12.7" viewBox="0 0 13 12.7"><path d="M7.9,0.1 L12.9,4.6 L11.5,6.6 L9,7.9 L7.6,11.9 L1,5.7 L4.8,4.2 L6,1Z" fill="#8e8e8e"/><path d="M3.6,9.1 L0.6,12.3" stroke="#8e8e8e" stroke-width="1.5" stroke-linecap="round"/></svg>
<svg class="abs" style="left:469.4px;top:362.6px;" width="53" height="42" viewBox="0 0 53 42"><defs><linearGradient id="fw" x1="0" y1="0" x2="1" y2="1"><stop offset="0" stop-color="#3acb8e"/><stop offset="1" stop-color="#0e98a8"/></linearGradient></defs>
<path d="M0.3,3 Q0.3,0.4 2.9,0.4 H17.4 Q19.2,0.4 20.3,1.8 L22.8,5 Q23.6,5.9 24.8,5.9 H50.2 Q52.7,5.9 52.7,8.4 V14 H0.3Z" fill="#13795b"/>
<path d="M0.3,9.6 H19.5 Q21.2,9.6 22.4,8.4 L23.6,7.2 Q24.8,5.9 26.5,5.9 H50.2 Q52.7,5.9 52.7,8.4 V38.8 Q52.7,41.4 50.1,41.4 H2.9 Q0.3,41.4 0.3,38.8Z" fill="url(#fw)"/>
<path d="M26.5,13.5 V30 M19,23.5 L26.5,31 L34,23.5" fill="none" stroke="#fff" stroke-width="2.6" stroke-linejoin="miter"/><path d="M18,35.6 H35" stroke="#fff" stroke-width="2.6"/></svg>
<div class="t" style="left:540.3px;top:357.9px;font-size:15px;color:#1b1b1b;letter-spacing:0.07px;">Downloads</div>
<div class="t" style="left:540.8px;top:377.9px;font-size:15px;color:#5e5e5e;letter-spacing:-0.11px;">Stored locally</div>
<svg class="abs" style="left:545.8px;top:400px;" width="13" height="12.7" viewBox="0 0 13 12.7"><path d="M7.9,0.1 L12.9,4.6 L11.5,6.6 L9,7.9 L7.6,11.9 L1,5.7 L4.8,4.2 L6,1Z" fill="#8e8e8e"/><path d="M3.6,9.1 L0.6,12.3" stroke="#8e8e8e" stroke-width="1.5" stroke-linecap="round"/></svg>
<svg class="abs" style="left:469.4px;top:438.6px;" width="53" height="42" viewBox="0 0 53 42"><defs><linearGradient id="fo" x1="0" y1="0" x2="1" y2="1"><stop offset="0" stop-color="#abc5de"/><stop offset="1" stop-color="#7290ac"/></linearGradient></defs>
<path d="M0.3,3 Q0.3,0.4 2.9,0.4 H17.4 Q19.2,0.4 20.3,1.8 L22.8,5 Q23.6,5.9 24.8,5.9 H50.2 Q52.7,5.9 52.7,8.4 V14 H0.3Z" fill="#5e7d90"/>
<path d="M0.3,9.6 H19.5 Q21.2,9.6 22.4,8.4 L23.6,7.2 Q24.8,5.9 26.5,5.9 H50.2 Q52.7,5.9 52.7,8.4 V38.8 Q52.7,41.4 50.1,41.4 H2.9 Q0.3,41.4 0.3,38.8Z" fill="url(#fo)"/>
<path d="M14,15.6 H25.4 M14,21.6 H25.4 M14,27.6 H39.6 M14,33.6 H39.6" stroke="#fff" stroke-width="2.3"/><rect x="30.5" y="14" width="9.1" height="8.6" fill="#fff"/></svg>
<div class="t" style="left:540.3px;top:433.9px;font-size:15px;color:#1b1b1b;letter-spacing:0.02px;">Documents</div>
<div class="t" style="left:540.8px;top:453.9px;font-size:15px;color:#5e5e5e;letter-spacing:-0.11px;">Stored locally</div>
<svg class="abs" style="left:545.8px;top:476px;" width="13" height="12.7" viewBox="0 0 13 12.7"><path d="M7.9,0.1 L12.9,4.6 L11.5,6.6 L9,7.9 L7.6,11.9 L1,5.7 L4.8,4.2 L6,1Z" fill="#8e8e8e"/><path d="M3.6,9.1 L0.6,12.3" stroke="#8e8e8e" stroke-width="1.5" stroke-linecap="round"/></svg>
<svg class="abs" style="left:469.4px;top:514.6px;" width="53" height="42" viewBox="0 0 53 42"><defs><linearGradient id="fp" x1="0" y1="0" x2="1" y2="1"><stop offset="0" stop-color="#3db2f2"/><stop offset="1" stop-color="#0b6fcb"/></linearGradient></defs>
<path d="M0.3,3 Q0.3,0.4 2.9,0.4 H17.4 Q19.2,0.4 20.3,1.8 L22.8,5 Q23.6,5.9 24.8,5.9 H50.2 Q52.7,5.9 52.7,8.4 V14 H0.3Z" fill="#1667c8"/>
<path d="M0.3,9.6 H19.5 Q21.2,9.6 22.4,8.4 L23.6,7.2 Q24.8,5.9 26.5,5.9 H50.2 Q52.7,5.9 52.7,8.4 V38.8 Q52.7,41.4 50.1,41.4 H2.9 Q0.3,41.4 0.3,38.8Z" fill="url(#fp)"/>
<defs><linearGradient id="mt" x1="0" y1="0" x2="0" y2="1"><stop offset="0" stop-color="#ffffff"/><stop offset="1" stop-color="#c9d3fb"/></linearGradient></defs><path d="M8.5,40.6 L26,21.6 L44,40.6 Q40,41.4 26,41.4 Q12,41.4 8.5,40.6Z" fill="url(#mt)"/><circle cx="33.4" cy="15" r="2.7" fill="#fff"/></svg>
<div class="t" style="left:540.3px;top:509.9px;font-size:15px;color:#1b1b1b;letter-spacing:-0.22px;">Pictures</div>
<div class="t" style="left:540.8px;top:529.9px;font-size:15px;color:#5e5e5e;letter-spacing:-0.11px;">Stored locally</div>
<svg class="abs" style="left:545.8px;top:552px;" width="13" height="12.7" viewBox="0 0 13 12.7"><path d="M7.9,0.1 L12.9,4.6 L11.5,6.6 L9,7.9 L7.6,11.9 L1,5.7 L4.8,4.2 L6,1Z" fill="#8e8e8e"/><path d="M3.6,9.1 L0.6,12.3" stroke="#8e8e8e" stroke-width="1.5" stroke-linecap="round"/></svg>
<svg class="abs" style="left:469.4px;top:590.6px;" width="53" height="42" viewBox="0 0 53 42"><defs><linearGradient id="fm" x1="0" y1="0" x2="1" y2="1"><stop offset="0" stop-color="#f99b56"/><stop offset=".55" stop-color="#e37c74"/><stop offset="1" stop-color="#a85bc8"/></linearGradient></defs>
<path d="M0.3,3 Q0.3,0.4 2.9,0.4 H17.4 Q19.2,0.4 20.3,1.8 L22.8,5 Q23.6,5.9 24.8,5.9 H50.2 Q52.7,5.9 52.7,8.4 V14 H0.3Z" fill="#c9650e"/>
<path d="M0.3,9.6 H19.5 Q21.2,9.6 22.4,8.4 L23.6,7.2 Q24.8,5.9 26.5,5.9 H50.2 Q52.7,5.9 52.7,8.4 V38.8 Q52.7,41.4 50.1,41.4 H2.9 Q0.3,41.4 0.3,38.8Z" fill="url(#fm)"/>
<path transform="translate(-1.5,-0.6)" d="M26,16.4 Q26,14.6 27.8,14 L34,12 Q36,11.4 36,13.4 V18.4 L29.6,20.6 V31.6 A5.2,4.8 0 1 1 26,27.4Z" fill="#fff"/></svg>
<div class="t" style="left:540.3px;top:585.9px;font-size:15px;color:#1b1b1b;letter-spacing:0.21px;">Music</div>
<div class="t" style="left:540.8px;top:605.9px;font-size:15px;color:#5e5e5e;letter-spacing:-0.11px;">Stored locally</div>
<svg class="abs" style="left:545.8px;top:628px;" width="13" height="12.7" viewBox="0 0 13 12.7"><path d="M7.9,0.1 L12.9,4.6 L11.5,6.6 L9,7.9 L7.6,11.9 L1,5.7 L4.8,4.2 L6,1Z" fill="#8e8e8e"/><path d="M3.6,9.1 L0.6,12.3" stroke="#8e8e8e" stroke-width="1.5" stroke-linecap="round"/></svg>
</div></div>
<div class="abs" style="left:653.8px;top:225.6px;width:210.2px;height:213px;border-radius:8px;background:#fbfbfb;box-shadow:0 0 0 1px rgba(0,0,0,.08),0 8px 16px rgba(0,0,0,.13)"></div>
<div class="abs" style="left:655px;top:310px;width:209px;height:1px;background:#e6e6e6;"></div>
<div class="abs" style="left:655px;top:394px;width:209px;height:1px;background:#e6e6e6;"></div>
<div class="abs" style="left:659.5px;top:399px;width:200px;height:35.5px;background:#f0f0f0;border-radius:4px"></div>
<svg class="abs" style="left:677.7px;top:245.5px;" width="5.8" height="5.8" viewBox="0 0 5.8 5.8"><circle cx="2.9" cy="2.9" r="2.9" fill="#5a5a5a"/></svg>
<svg class="abs" style="left:677.7px;top:329.5px;" width="5.8" height="5.8" viewBox="0 0 5.8 5.8"><circle cx="2.9" cy="2.9" r="2.9" fill="#5a5a5a"/></svg>
<svg class="abs" style="left:708px;top:240.2px;" width="20" height="15" viewBox="0 0 20 15"><rect x="0.7" y="0.7" width="6.4" height="4.8" rx="1.8" fill="none" stroke="#5c5c5c" stroke-width="1.4"/><rect x="0.7" y="9.5" width="6.4" height="4.8" rx="1.8" fill="none" stroke="#5c5c5c" stroke-width="1.25"/><path d="M10.6,2.2 H19.4 M10.6,10.7 H19.4" stroke="#5c5c5c" stroke-width="1.3" stroke-linecap="round"/></svg>
<div class="t" style="left:743.3px;top:241.1px;font-size:18px;color:#1b1b1b;letter-spacing:-0.82px;">Tiles</div>
<svg class="abs" style="left:709px;top:279.5px;" width="18" height="17" viewBox="0 0 18 17"><rect x="0.6" y="0.6" width="5.2" height="3.6" rx="1.6" fill="none" stroke="#5c5c5c" stroke-width="1.15"/><rect x="0.6" y="6.7" width="5.2" height="3.6" rx="1.6" fill="none" stroke="#5c5c5c" stroke-width="1.15"/><rect x="0.6" y="12.8" width="5.2" height="3.6" rx="1.6" fill="none" stroke="#5c5c5c" stroke-width="1.15"/><path d="M9.4,2.1 H17 M9.4,8.3 H17 M9.4,14.4 H17" stroke="#5c5c5c" stroke-width="1.25" stroke-linecap="round"/></svg>
<div class="t" style="left:742.8px;top:281.1px;font-size:18px;color:#1b1b1b;letter-spacing:-0.22px;">Content</div>
<svg class="abs" style="left:708px;top:324.4px;" width="20" height="15" viewBox="0 0 20 15"><path d="M11.4,0.7 H3.7 Q0.7,0.7 0.7,3.7 V11.1 Q0.7,14.1 3.7,14.1 H11.4" fill="none" stroke="#666" stroke-width="1.3"/><path d="M11.4,0.7 H16.3 Q19.3,0.7 19.3,3.7 V11.1 Q19.3,14.1 16.3,14.1 H11.4Z" fill="#eef5fc" stroke="#1a7ee0" stroke-width="1.3"/><path d="M13.8,4.9 H16.8 M13.8,7.4 H16.8 M13.8,9.9 H16.8" stroke="#1a7ee0" stroke-width="1"/></svg>
<div class="t" style="left:742.3px;top:325.1px;font-size:18px;color:#1b1b1b;letter-spacing:-0.33px;">Details pane</div>
<svg class="abs" style="left:708px;top:364.4px;" width="20" height="15" viewBox="0 0 20 15"><path d="M11.4,0.7 H3.7 Q0.7,0.7 0.7,3.7 V11.1 Q0.7,14.1 3.7,14.1 H11.4" fill="none" stroke="#666" stroke-width="1.3"/><path d="M11.4,0.7 H16.3 Q19.3,0.7 19.3,3.7 V11.1 Q19.3,14.1 16.3,14.1 H11.4Z" fill="#f6f9fd" stroke="#1a7ee0" stroke-width="1.3"/></svg>
<div class="t" style="left:742.3px;top:365.1px;font-size:18px;color:#1b1b1b;letter-spacing:-0.48px;">Preview pane</div>
<div class="t" style="left:742.9px;top:409.1px;font-size:18px;color:#1b1b1b;letter-spacing:-0.86px;">Show</div>
<svg class="abs" style="left:835.5px;top:412px;" width="6.5" height="11" viewBox="0 0 6.5 11"><path d="M0.7,0.7 L5.6,5.5 L0.7,10.3" fill="none" stroke="#555" stroke-width="1.2" stroke-linecap="round" stroke-linejoin="round"/></svg>
<div class="abs" style="left:860.5px;top:396.8px;width:268.5px;height:212.7px;border-radius:8px;background:linear-gradient(90deg,#fbfbfc 0%,#f8f9fb 55%,#eceef6 72%,#e3e6f3 100%);box-shadow:0 0 0 1px rgba(0,0,0,.10),0 8px 16px rgba(0,0,0,.18)"></div>
<div class="abs" style="left:1048px;top:398px;width:80.5px;height:60px;border-radius:0 8px 0 0;background:linear-gradient(180deg,rgba(240,243,249,.9),rgba(240,243,249,0))"></div>
<div class="abs" style="left:861px;top:441px;width:268px;height:1px;background:rgba(0,0,0,.075);"></div>
<div class="abs" style="left:861px;top:485px;width:268px;height:1px;background:rgba(0,0,0,.075);"></div>
<div class="abs" style="left:865.5px;top:568px;width:258.5px;height:36px;border-radius:4px;background:rgba(0,0,10,.048)"></div>
<svg class="abs" style="left:881px;top:416px;" width="11.5" height="8" viewBox="0 0 11.5 8"><path d="M0.6,4 L3.9,7.3 L10.9,0.6" fill="none" stroke="#555" stroke-width="1.15" stroke-linecap="round" stroke-linejoin="round"/></svg>
<svg class="abs" style="left:914px;top:411.6px;" width="20" height="15" viewBox="0 0 20 15"><path d="M8.3,0.7 H16.3 Q19.3,0.7 19.3,3.7 V11.1 Q19.3,14.1 16.3,14.1 H8.3" fill="none" stroke="#666" stroke-width="1.3"/><path d="M8.3,0.7 H3.7 Q0.7,0.7 0.7,3.7 V11.1 Q0.7,14.1 3.7,14.1 H8.3Z" fill="#f3f8fd" stroke="#1a7ee0" stroke-width="1.3"/></svg>
<div class="t" style="left:948.4px;top:412.1px;font-size:18px;color:#1b1b1b;letter-spacing:-0.14px;">Navigation pane</div>
<svg class="abs" style="left:914px;top:453px;" width="20" height="20" viewBox="0 0 20 20"><path d="M4.5,0.6 V7.6 M1,4.4 L4.5,7.9 L8,4.4 M4.5,19.4 V12.4 M1,15.6 L4.5,12.1 L8,15.6" fill="none" stroke="#1a7ee0" stroke-width="1.25" stroke-linecap="round" stroke-linejoin="round"/><path d="M11.4,4.4 H19.4 M11.4,8.2 H19.4 M11.4,12 H19.4 M11.4,15.8 H19.4" stroke="#666" stroke-width="1.2"/></svg>
<div class="t" style="left:948.9px;top:456.1px;font-size:18px;color:#1b1b1b;letter-spacing:-0.41px;">Compact view</div>
<svg class="abs" style="left:914px;top:498px;" width="20" height="18" viewBox="0 0 20 18"><path d="M0.7,15 V3 Q0.7,0.7 3,0.7 H6.5 Q7.6,0.7 8.4,1.6 L9.6,3 H17 Q19.3,3 19.3,5.3 V8" fill="none" stroke="#666" stroke-width="1.25"/><path d="M0.7,4.8 H7 Q8.2,4.8 9,4 L9.6,3" fill="none" stroke="#666" stroke-width="1.1"/><rect x="9" y="8" width="10.6" height="10" rx="2" fill="#1a7ee0"/></svg>
<div class="t" style="left:948.2px;top:500.1px;font-size:18px;color:#1b1b1b;letter-spacing:-0.48px;">Item check boxes</div>
<svg class="abs" style="left:914.5px;top:581px;" width="19" height="13" viewBox="0 0 19 13"><path d="M0.7,6.8 Q2.6,0.7 9.5,0.7 Q16.4,0.7 18.3,6.8" fill="none" stroke="#666" stroke-width="1.25" stroke-linecap="round"/><circle cx="9.5" cy="8.4" r="3.4" fill="none" stroke="#666" stroke-width="1.25"/></svg>
<div class="t" style="left:948.4px;top:580.1px;font-size:18px;color:#1b1b1b;letter-spacing:-0.10px;">Hidden items</div>
<div class="abs" style="left:764px;top:510.5px;width:371.5px;height:56px;border-radius:5px;background:#f9f9f9;box-shadow:0 0 0 1px rgba(0,0,0,.10),0 4px 9px rgba(0,0,0,.16)"></div>
<div class="t" style="left:774.6px;top:521.2px;font-size:15px;color:#1f1f1f;letter-spacing:-0.03px;">Show or hide the files and folders that are marked as</div>
<div class="t" style="left:774.3px;top:541.1px;font-size:15px;color:#1f1f1f;letter-spacing:0.33px;">hidden.</div>
</body>
</html>
